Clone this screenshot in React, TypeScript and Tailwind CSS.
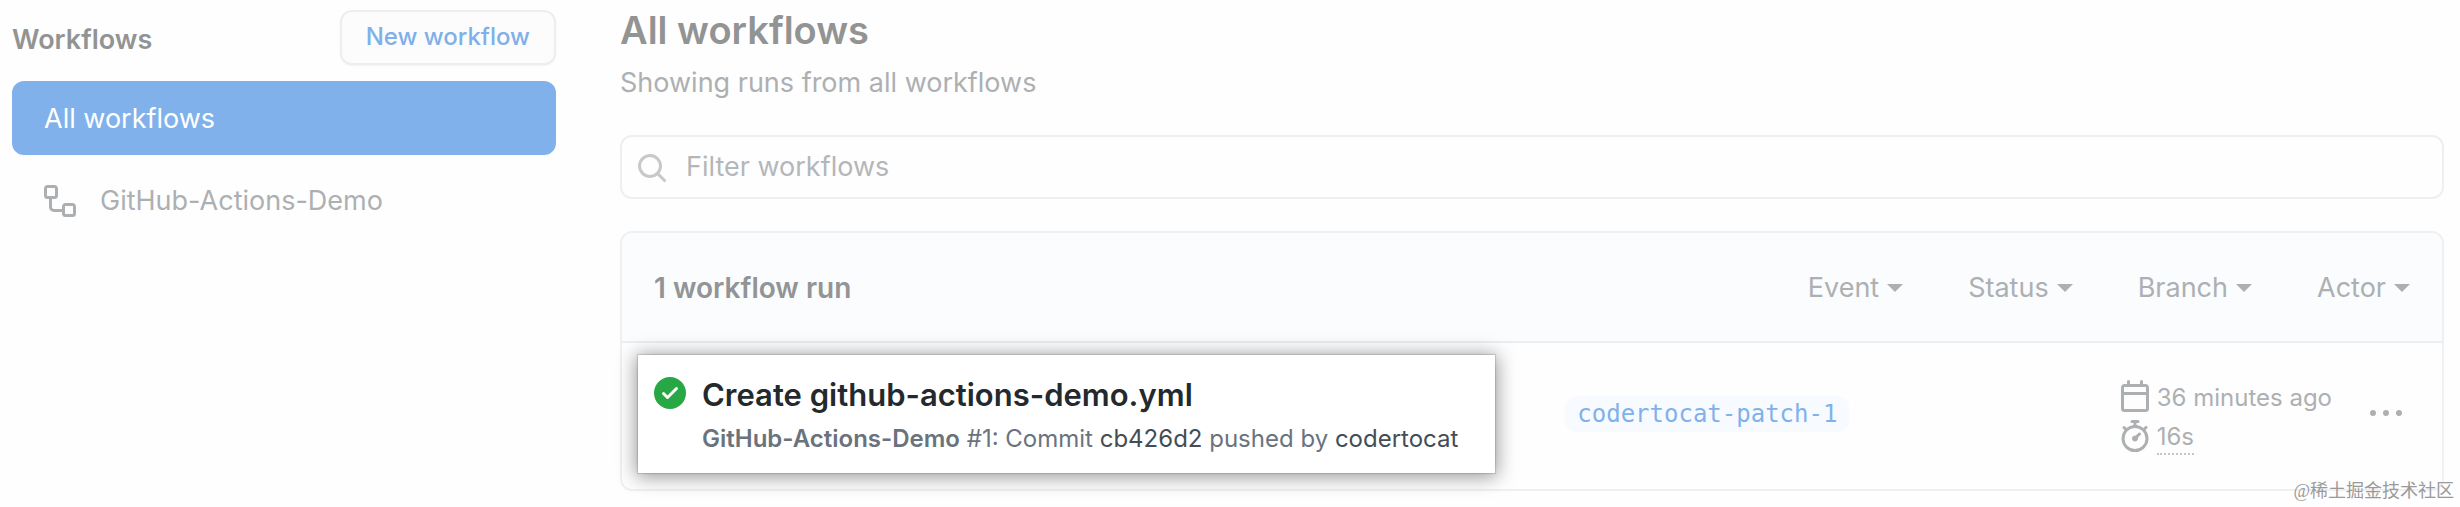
import React from "react";

const iconPaths = {
  workflow:
    "M0 1.75C0 .784.784 0 1.75 0h3.5C6.216 0 7 .784 7 1.75v3.5A1.75 1.75 0 015.25 7H4v4a1 1 0 001 1h4v-1.25C9 9.784 9.784 9 10.75 9h3.5c.966 0 1.75.784 1.75 1.75v3.5A1.75 1.75 0 0114.25 16h-3.5A1.75 1.75 0 019 14.25v-.75H5A2.5 2.5 0 012.5 11V7h-.75A1.75 1.75 0 010 5.25v-3.5zm1.75-.25a.25.25 0 00-.25.25v3.5c0 .138.112.25.25.25h3.5a.25.25 0 00.25-.25v-3.5a.25.25 0 00-.25-.25h-3.5zm9 9a.25.25 0 00-.25.25v3.5c0 .138.112.25.25.25h3.5a.25.25 0 00.25-.25v-3.5a.25.25 0 00-.25-.25h-3.5z",
  search:
    "M11.5 7a4.499 4.499 0 11-8.998 0A4.499 4.499 0 0111.5 7zm-.82 4.74a6 6 0 111.06-1.06l3.04 3.04a.75.75 0 11-1.06 1.06l-3.04-3.04z",
  success:
    "M8 16A8 8 0 108 0a8 8 0 000 16zm3.78-9.72a.75.75 0 00-1.06-1.06L6.75 9.19 5.28 7.72a.75.75 0 00-1.06 1.06l2 2a.75.75 0 001.06 0l4.5-4.5z",
  calendar:
    "M4.75 0a.75.75 0 01.75.75V2h5V.75a.75.75 0 011.5 0V2h1.25c.966 0 1.75.784 1.75 1.75v10.5A1.75 1.75 0 0113.25 16H2.75A1.75 1.75 0 011 14.25V3.75C1 2.784 1.784 2 2.75 2H4V.75A.75.75 0 014.75 0zm0 3.5h8.5a.25.25 0 01.25.25V6h-11V3.75a.25.25 0 01.25-.25h2zm-2.25 4v6.75c0 .138.112.25.25.25h10.5a.25.25 0 00.25-.25V7.5h-11z",
  stopwatch:
    "M5.75.75A.75.75 0 016.5 0h3a.75.75 0 010 1.5h-.75v1l-.001.041a6.718 6.718 0 013.464 1.435l.007-.006.75-.75a.75.75 0 111.06 1.06l-.75.75-.006.007a6.75 6.75 0 11-10.548 0L2.72 5.03l-.75-.75a.75.75 0 011.06-1.06l.75.75.007.006A6.718 6.718 0 017.25 2.541a.756.756 0 010-.041v-1H6.5a.75.75 0 01-.75-.75zM8 14.5A5.25 5.25 0 108 4a5.25 5.25 0 000 10.5zm.389-6.7l1.33-1.33a.75.75 0 111.061 1.06L9.45 8.861A1.502 1.502 0 018 10.75a1.5 1.5 0 11.389-2.95z",
  kebab:
    "M8 9a1.5 1.5 0 100-3 1.5 1.5 0 000 3zM1.5 9a1.5 1.5 0 100-3 1.5 1.5 0 000 3zm13 0a1.5 1.5 0 100-3 1.5 1.5 0 000 3z",
};

const Icon = ({
  name,
  className = "",
}: {
  name: keyof typeof iconPaths;
  className?: string;
}) => (
  <svg
    viewBox="0 0 16 16"
    fill="currentColor"
    fillRule="evenodd"
    aria-hidden="true"
    className={`w-8 h-8 shrink-0 ${className}`}
  >
    <path d={iconPaths[name]} />
  </svg>
);

const filters = ["Event", "Status", "Branch", "Actor"];

const Sidebar = () => (
  <aside className="w-[544px] shrink-0 pt-[10px]">
    <div className="flex items-center justify-between mb-4">
      <h2 className="pt-1 text-[27px] leading-10 font-semibold text-[#929494]">
        Workflows
      </h2>
      <button className="h-[55px] px-6 pb-[2px] rounded-xl border-2 border-[#eeeeef] bg-[#fcfcfd] shadow-xs text-2xl font-medium text-[#7fb0e8]">
        New workflow
      </button>
    </div>
    <nav className="text-[27px] leading-[42px]">
      <a
        href="#all"
        className="block px-8 pt-[17px] pb-[15px] rounded-xl bg-[#81b1ea] text-white"
      >
        All workflows
      </a>
      <a
        href="#demo"
        className="flex items-center gap-6 px-8 pt-[17px] pb-[15px] mt-2 text-[#adb0b2]"
      >
        <Icon name="workflow" />
        GitHub-Actions-Demo
      </a>
    </nav>
  </aside>
);

const RunRow = () => (
  <li className="flex items-center pt-3 pb-4 pl-4 pr-10">
    {/* Highlighted run */}
    <div className="relative min-w-[48.6%] flex gap-4 h-[118px] pl-4 pt-5 bg-white shadow-[0_2px_18px_2px_rgba(0,0,0,0.4),0_0_1px_1px_rgba(0,0,0,0.12)]">
      <Icon name="success" className="mt-[2px] text-[#28a745]" />
      <div className="whitespace-nowrap">
        <a
          href="#run"
          className="block text-[31px] leading-10 font-semibold text-[#24292e]"
        >
          Create github-actions-demo.yml
        </a>
        <p className="mt-[6px] text-2xl leading-9 text-[#6a737d]">
          <span className="font-semibold">GitHub-Actions-Demo</span> #1: Commit{" "}
          <a href="#commit" className="text-[#444d56]">
            cb426d2
          </a>{" "}
          pushed by{" "}
          <a href="#user" className="text-[#444d56]">
            codertocat
          </a>
        </p>
      </div>
    </div>
    <a
      href="#branch"
      className="ml-[70px] px-3 rounded-xl bg-[#f7fbff] font-['DejaVu_Sans_Mono',monospace] text-2xl leading-9 text-[#81b1ea]"
    >
      codertocat-patch-1
    </a>
    <div className="ml-auto pt-1 text-2xl text-[#adb0b2]">
      <div className="flex items-center gap-[6px] h-10">
        <Icon name="calendar" />
        <span className="pt-1">36 minutes ago</span>
      </div>
      <div className="flex items-center gap-[6px] h-10">
        <Icon name="stopwatch" />
        <span className="pt-1 border-b-2 border-dotted border-[#c4c6c8]">
          16s
        </span>
      </div>
    </div>
    <button aria-label="Show options" className="ml-[38px] text-[#adb0b2]">
      <Icon name="kebab" />
    </button>
  </li>
);

const App = () => {
  return (
    <div className="relative flex gap-16 pl-3 pr-4 bg-[#fefefe] font-['Inter','Liberation_Sans',sans-serif]">
      <Sidebar />
      <main className="flex-1 min-w-0 pt-[6px] pb-4">
        <h1 className="text-[38px] leading-[48px] font-semibold text-[#929494]">
          All workflows
        </h1>
        <p className="mt-2 text-[27px] leading-[42px] text-[#adb0b2]">
          Showing runs from all workflows
        </p>

        {/* Search */}
        <label className="flex items-center gap-[18px] h-16 mt-[31px] pl-[14px] pr-4 rounded-xl border-2 border-[#efefef] text-[#c6c8c9]">
          <Icon name="search" className="mt-[2px]" />
          <input
            type="text"
            aria-label="Filter workflows"
            placeholder="Filter workflows"
            className="flex-1 text-[27px] outline-none placeholder:text-[#b4b7b9]"
          />
        </label>

        {/* Runs */}
        <section className="mt-8 rounded-xl border-2 border-[#eff0f1]">
          <header className="flex items-center justify-between h-[110px] pt-[2px] px-8 rounded-t-xl border-b-2 border-[#eceef0] bg-[#fafcfe] text-[27px]">
            <h3 className="text-[28px] font-semibold text-[#929496]">
              1 workflow run
            </h3>
            <div className="flex gap-[65px] text-[#adb0b2]">
              {filters.map((filter) => (
                <button key={filter} className="flex items-center gap-2">
                  {filter}
                  <svg
                    viewBox="0 0 16 8"
                    fill="currentColor"
                    aria-hidden="true"
                    className="w-4 h-2"
                  >
                    <path d="M0 0h16L8 8z" />
                  </svg>
                </button>
              ))}
            </div>
          </header>
          <ul>
            <RunRow />
          </ul>
        </section>
      </main>

      {/* Watermark */}
      <div className="absolute right-[6px] bottom-1 text-lg leading-6 text-[#9a9a9a] font-['Liberation_Serif','Noto_Sans_CJK_SC',serif]">
        @稀土掘金技术社区
      </div>
    </div>
  );
};

export default App;
